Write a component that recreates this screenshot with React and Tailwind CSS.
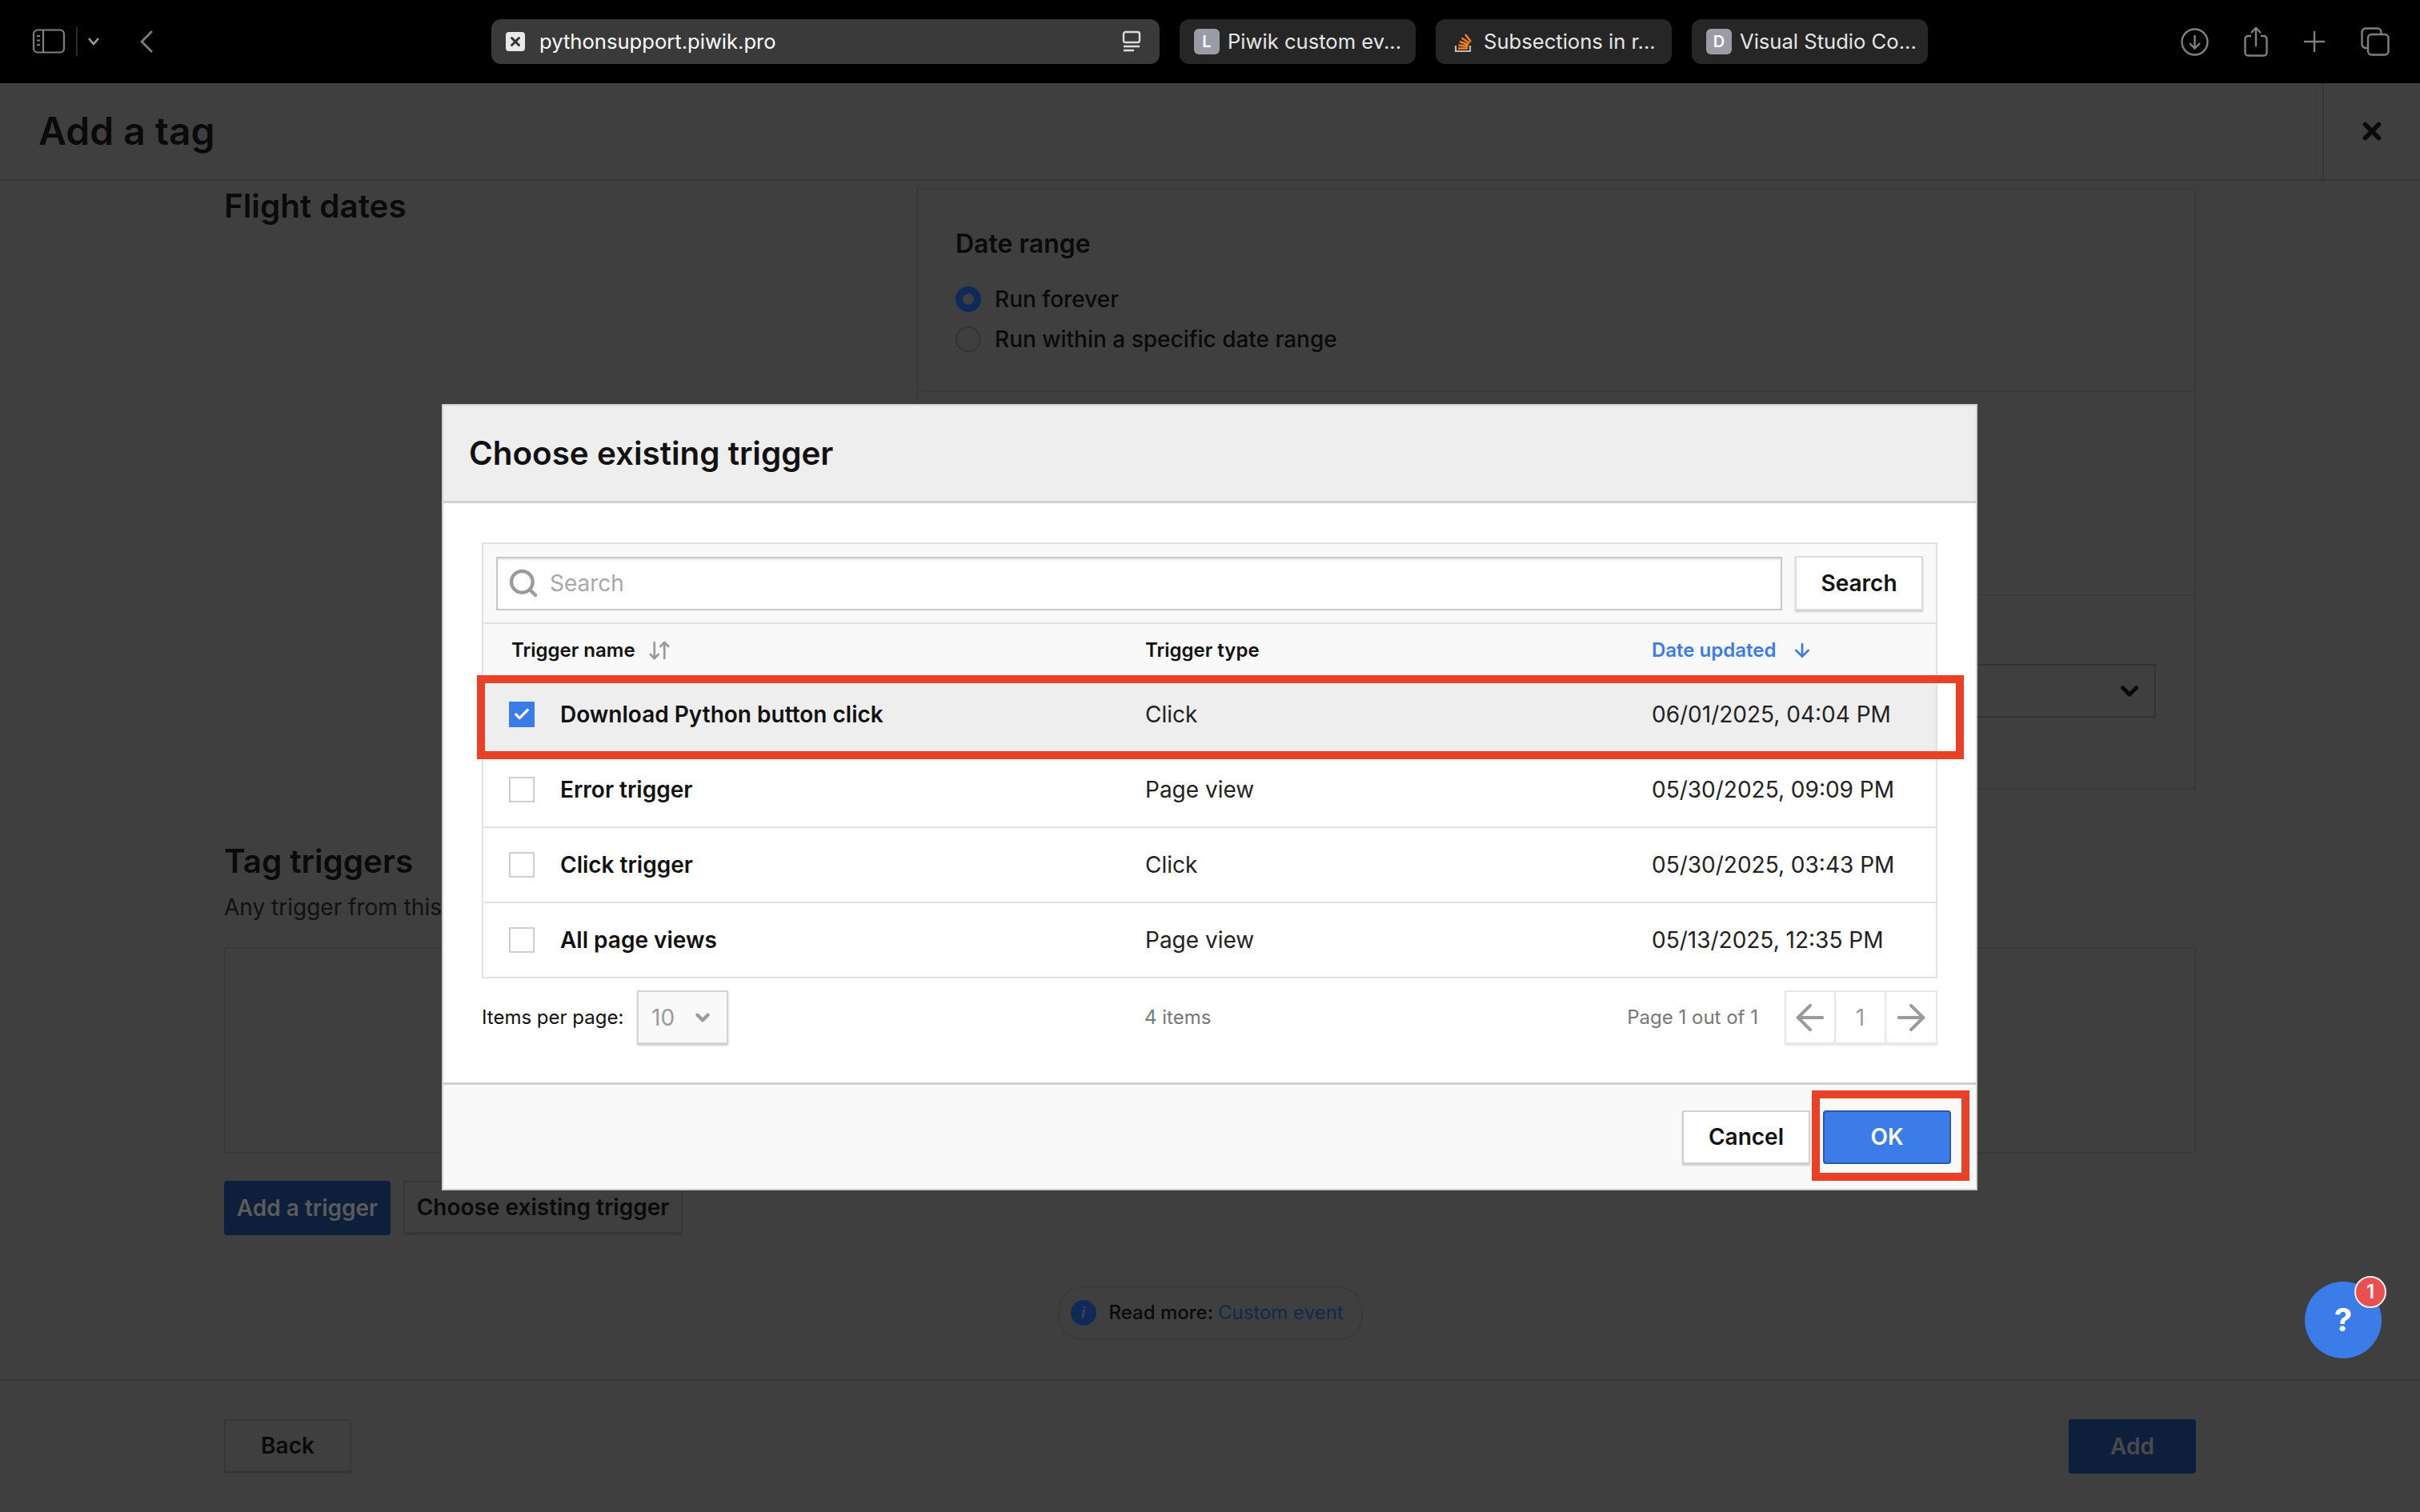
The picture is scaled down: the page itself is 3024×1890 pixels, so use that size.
import { ArrowDown, ArrowDownUp, ArrowLeft, ArrowRight, Check, ChevronDown, Search, X } from 'lucide-react'

const rows = [
  { name: 'Download Python button click', type: 'Click', date: '06/01/2025, 04:04 PM', checked: true },
  { name: 'Error trigger', type: 'Page view', date: '05/30/2025, 09:09 PM' },
  { name: 'Click trigger', type: 'Click', date: '05/30/2025, 03:43 PM' },
  { name: 'All page views', type: 'Page view', date: '05/13/2025, 12:35 PM' },
]

function BrowserTab({ letter, icon, title }) {
  return (
    <div className="flex h-14 w-[295px] items-center rounded-xl bg-[#262626] pl-[18px]">
      {icon || (
        <span className="flex h-8 w-8 items-center justify-center rounded-md bg-[#9b9ba6] text-xl font-semibold text-white">
          {letter}
        </span>
      )}
      <span className="ml-[10px] whitespace-nowrap text-[25.6px] text-[#e6e6e6]">{title}</span>
    </div>
  )
}

function BrowserBar() {
  return (
    <div className="flex h-[104px] items-center bg-black px-10">
      <svg width="42" height="32" viewBox="0 0 42 32" fill="none" stroke="#808080" strokeWidth="2.2">
        <rect x="2" y="1.5" width="38" height="28" rx="5" />
        <path d="M14 2v27M6 9h4M6 14.5h4M6 20h4" />
      </svg>
      <span className="ml-[13px] h-9 w-[2px] bg-[#2a2a2a]" />
      <svg className="ml-[12px]" width="16" height="12" viewBox="0 0 16 12" fill="none" stroke="#9a9a9a" strokeWidth="2.6">
        <path d="M2 2l6 7 6-7" />
      </svg>
      <svg className="ml-[48px]" width="20" height="30" viewBox="0 0 20 30" fill="none" stroke="#808080" strokeWidth="2.6">
        <path d="M17 2L4 15l13 13" />
      </svg>
      <div className="ml-[421px] flex h-14 w-[835px] items-center rounded-xl bg-[#3a3a3a] pl-[18px] pr-[22px]">
        <span className="flex h-6 w-6 items-center justify-center rounded bg-[#e8e8e8]">
          <X size={18} strokeWidth={4} className="text-[#333]" />
        </span>
        <span className="ml-[18px] flex-1 text-[25.6px] text-white">pythonsupport.piwik.pro</span>
        <svg width="26" height="28" viewBox="0 0 26 28" fill="none" stroke="#dcdcdc" strokeWidth="2.4">
          <rect x="3" y="2" width="20" height="13" rx="2.5" />
          <path d="M3 20h20M3 25h13" />
        </svg>
      </div>
      <div className="ml-[25px] flex gap-[25px]">
        <BrowserTab letter="L" title="Piwik custom ev..." />
        <BrowserTab
          title="Subsections in r..."
          icon={
            <svg width="32" height="32" viewBox="0 0 32 32" fill="none">
              <path d="M7 21v7h18v-7" stroke="#bcbbbb" strokeWidth="2.2" />
              <path
                d="M10 24.5h12M10.5 20.5l12 1.5M12 16l11 4M14.5 11.5l10 6.5M19 7l7 9"
                stroke="#f48024"
                strokeWidth="2.4"
              />
            </svg>
          }
        />
        <BrowserTab letter="D" title="Visual Studio Co..." />
      </div>
      <div className="-mr-[2px] ml-auto flex items-center gap-[44px]">
        <svg width="35" height="35" viewBox="0 0 35 35" fill="none" stroke="#808080" strokeWidth="2.4">
          <circle cx="17.5" cy="17.5" r="16" />
          <path d="M17.5 9v16M11 19l6.5 6.5L24 19" />
        </svg>
        <svg width="30" height="38" viewBox="0 0 30 38" fill="none" stroke="#808080" strokeWidth="2.4">
          <path d="M9 12H5a3.5 3.5 0 0 0-3.5 3.5V33A3.5 3.5 0 0 0 5 36.5h20a3.5 3.5 0 0 0 3.500-3.500V15.500A3.500 3.500 0 0 0 25 12h-4" />
          <path d="M15 25V2M9 8l6-6 6 6" />
        </svg>
        <svg width="28" height="28" viewBox="0 0 28 28" fill="none" stroke="#808080" strokeWidth="2.4">
          <path d="M14 1v26M1 14h26" />
        </svg>
        <svg width="36" height="36" viewBox="0 0 36 36" fill="none" stroke="#808080" strokeWidth="2.4">
          <path d="M8 26H6a4.500 4.500 0 0 1-4.500-4.500V6A4.500 4.500 0 0 1 6 1.500h15A4.500 4.500 0 0 1 25.500 6v2" />
          <rect x="9" y="9" width="25.500" height="25.500" rx="4.500" />
        </svg>
      </div>
    </div>
  )
}

function PageBehind() {
  return (
    <div className="flex h-[1786px] flex-col bg-[#3f3f3f] text-[#0a0a0a]">
      <div className="flex h-[122px] shrink-0 items-center border-b-2 border-[#353535]">
        <h1 className="flex-1 pl-[48px] text-[48px] font-semibold">Add a tag</h1>
        <div className="flex h-full w-[122px] items-center justify-center border-l-2 border-[#353535]">
          <X size={34} strokeWidth={4} />
        </div>
      </div>
      <div className="flex flex-1 flex-col overflow-hidden px-[280px]">
        <div className="flex items-start">
          <h2 className="w-[865px] pt-[2px] text-[40.4px] font-semibold">Flight dates</h2>
          <div className="mt-[9px] h-[752px] flex-1 border-2 border-[#393939]">
            <div className="h-[253px] border-b-2 border-[#393939] px-[47px] pt-[44px]">
              <h3 className="text-[32px] font-semibold">Date range</h3>
              <div className="mt-[24px] flex items-center gap-[17px] text-[28px] font-medium">
                <span className="h-8 w-8 rounded-full border-[9px] border-[#102a57] bg-[#3f3f3f]" />
                Run forever
              </div>
              <div className="mt-[8px] flex items-center gap-[17px] text-[28px] font-medium">
                <span className="h-8 w-8 rounded-full border-2 border-[#333]" />
                Run within a specific date range
              </div>
            </div>
            <div className="h-[255px] border-b-2 border-[#393939]" />
            <div className="flex justify-end px-[48px] pt-[85px]">
              <div className="flex h-[67px] w-[400px] items-center justify-end border-2 border-[#333] pr-[14px]">
                <ChevronDown size={34} strokeWidth={3.5} />
              </div>
            </div>
          </div>
        </div>
        <h2 className="mt-[60px] text-[40.4px] font-semibold">Tag triggers</h2>
        <p className="mt-[5px] text-[28px] text-[#111]">Any trigger from this</p>
        <div className="mt-[29px] h-[258px] shrink-0 border-2 border-[#393939]" />
        <div className="mt-[34px] flex gap-4">
          <button className="h-[68px] w-[208px] rounded-sm bg-[#0e1f3c] text-[28px] font-semibold text-[#5b5b5b]">
            Add a trigger
          </button>
          <button className="h-[68px] w-[349px] border-2 border-b-4 border-[#363636] text-[28px] font-semibold">
            Choose existing trigger
          </button>
        </div>
        <div className="mt-[64px] flex justify-center">
          <div className="flex h-[67px] w-[381px] items-center whitespace-nowrap rounded-[30px] border-2 border-[#3a3a3a] pl-[14px] text-[24px]">
            <span className="flex h-8 w-8 items-center justify-center rounded-full bg-[#0f2a57] text-xl font-bold italic text-[#3f3f3f]">
              i
            </span>
            <span className="ml-[16px] font-medium">Read more:</span>
            <span className="ml-[6px] text-[#14284f]">Custom event</span>
          </div>
        </div>
      </div>
      <div className="flex h-[166px] shrink-0 items-center justify-between border-t-2 border-[#363636] px-[280px]">
        <button className="h-[68px] w-[159px] border-2 border-b-4 border-[#363636] text-[28px] font-semibold">
          Back
        </button>
        <button className="h-[68px] w-[159px] rounded-sm bg-[#0e1f3c] text-[28px] font-semibold text-[#4a4a4a]">
          Add
        </button>
      </div>
    </div>
  )
}

function TriggerRow({ row }) {
  return (
    <div
      className={`flex h-[94px] items-center border-b-2 border-[#e2e2e2] ${row.checked ? 'bg-[#eeeeee]' : 'bg-white'}`}
    >
      <span
        className={`ml-[32px] flex h-8 w-8 items-center justify-center ${row.checked ? 'bg-[#3b7ce9]' : 'border-2 border-[#cfcfcf] bg-white'}`}
      >
        {row.checked && <Check size={22} strokeWidth={3.5} className="text-white" />}
      </span>
      <span className="ml-[32px] w-[731px] text-[28px] font-semibold text-[#111]">{row.name}</span>
      <span className="w-[633px] text-[28px] text-[#222]">{row.type}</span>
      <span className="text-[28px] text-[#222]">{row.date}</span>
    </div>
  )
}

function ChooseTriggerModal() {
  return (
    <div className="absolute left-[552px] top-[505px] flex h-[983px] w-[1919px] flex-col border-2 border-[#d0d0d0] bg-white text-[#111]">
      <div className="flex h-[122px] shrink-0 items-center border-b-[3px] border-[#d0d0d0] bg-[#eeeeee] pl-[32px] pt-[2px]">
        <h2 className="text-[40.4px] font-semibold">Choose existing trigger</h2>
      </div>
      <div className="flex-1 px-[48px] pt-[49px]">
        <div className="border-2 border-b-0 border-[#e2e2e2]">
          <div className="flex h-[100px] items-center gap-4 border-b-2 border-[#e2e2e2] bg-[#f9f9f9] px-4">
            <div className="flex h-[67px] flex-1 items-center border-2 border-[#c8c8c8] bg-white pl-[12px] shadow-[inset_0_2px_2px_#e8e8e8]">
              <Search size={40} strokeWidth={2.6} className="text-[#9b9b9b]" />
              <span className="ml-[13px] text-[28px] text-[#a8a8a8]">Search</span>
            </div>
            <button className="h-[68px] w-[160px] border-2 border-[#dcdcdc] bg-white text-[28px] font-semibold shadow-[0_2px_2px_#cccccc]">
              Search
            </button>
          </div>
          <div className="flex h-[67px] items-center bg-[#f9f9f9] pb-[2px] text-[24px] font-semibold">
            <span className="ml-[35px] flex w-[792px] items-center gap-[15px]">
              Trigger name
              <ArrowDownUp size={30} strokeWidth={2.2} className="text-[#9b9b9b]" />
            </span>
            <span className="w-[633px]">Trigger type</span>
            <span className="flex items-center gap-[20px] text-[#3b7ce9]">
              Date updated
              <ArrowDown size={26} strokeWidth={2.5} />
            </span>
          </div>
          {rows.map((row) => (
            <TriggerRow key={row.name} row={row} />
          ))}
        </div>
        <div className="mt-[15px] flex h-[67px] items-center text-[24px]">
          <span className="w-[194px]">Items per page:</span>
          <div className="flex h-[67px] w-[114px] items-center justify-between border-2 border-[#d5d5d5] bg-[#f9f9f9] pl-[16px] pr-[17px] text-[28px] text-[#9b9b9b] shadow-[0_2px_2px_#cccccc]">
            10
            <ChevronDown size={26} strokeWidth={4} />
          </div>
          <span className="ml-[520px] text-[#777]">4 items</span>
          <span className="ml-auto mr-[33px] text-[#777]">Page 1 out of 1</span>
          <div className="flex text-[#9b9b9b]">
            <span className="flex h-[67px] w-[64px] items-center justify-center border-2 border-[#e8e8e8] shadow-[0_2px_2px_#e5e5e5]">
              <ArrowLeft size={52} strokeWidth={1.9} />
            </span>
            <span className="flex h-[67px] w-[63px] items-center justify-center border-2 border-l-0 border-[#e8e8e8] text-[28px] shadow-[0_2px_2px_#e5e5e5]">
              1
            </span>
            <span className="flex h-[67px] w-[64px] items-center justify-center border-2 border-l-0 border-[#e8e8e8] shadow-[0_2px_2px_#e5e5e5]">
              <ArrowRight size={52} strokeWidth={1.9} />
            </span>
          </div>
        </div>
      </div>
      <div className="flex h-[133px] shrink-0 items-center justify-end gap-4 border-t-[3px] border-[#d0d0d0] bg-[#f9f9f9] pr-[31px]">
        <button className="h-[67px] w-[160px] border-2 border-[#d0d0d0] bg-white text-[28px] font-semibold shadow-[0_2px_2px_#cccccc]">
          Cancel
        </button>
        <button className="h-[67px] w-[160px] rounded-sm border-2 border-[#2a56ad] bg-[#3b7ce9] text-[28px] font-semibold text-white">
          OK
        </button>
      </div>
    </div>
  )
}

export default function App() {
  return (
    <div className="relative h-[1890px] w-[3024px] overflow-hidden bg-[#3f3f3f] font-['Inter',sans-serif]">
      <BrowserBar />
      <PageBehind />
      <ChooseTriggerModal />
      {/* red annotations over the screenshot */}
      <div className="absolute left-[596px] top-[844px] h-[105px] w-[1858px] border-[10px] border-[#ea4025]" />
      <div className="absolute left-[2264px] top-[1363px] h-[113px] w-[197px] border-[10px] border-[#ea4025]" />
      <div className="absolute left-[2880px] top-[1602px] flex h-24 w-24 items-center justify-center rounded-full bg-[#3b7ce9] text-[40px] font-bold text-white">
        ?
      </div>
      <div className="absolute left-[2942px] top-[1595px] flex h-10 w-10 items-center justify-center rounded-full border-2 border-[#eeeeee] bg-[#ea5050] text-[24px] font-semibold text-white">
        1
      </div>
    </div>
  )
}
